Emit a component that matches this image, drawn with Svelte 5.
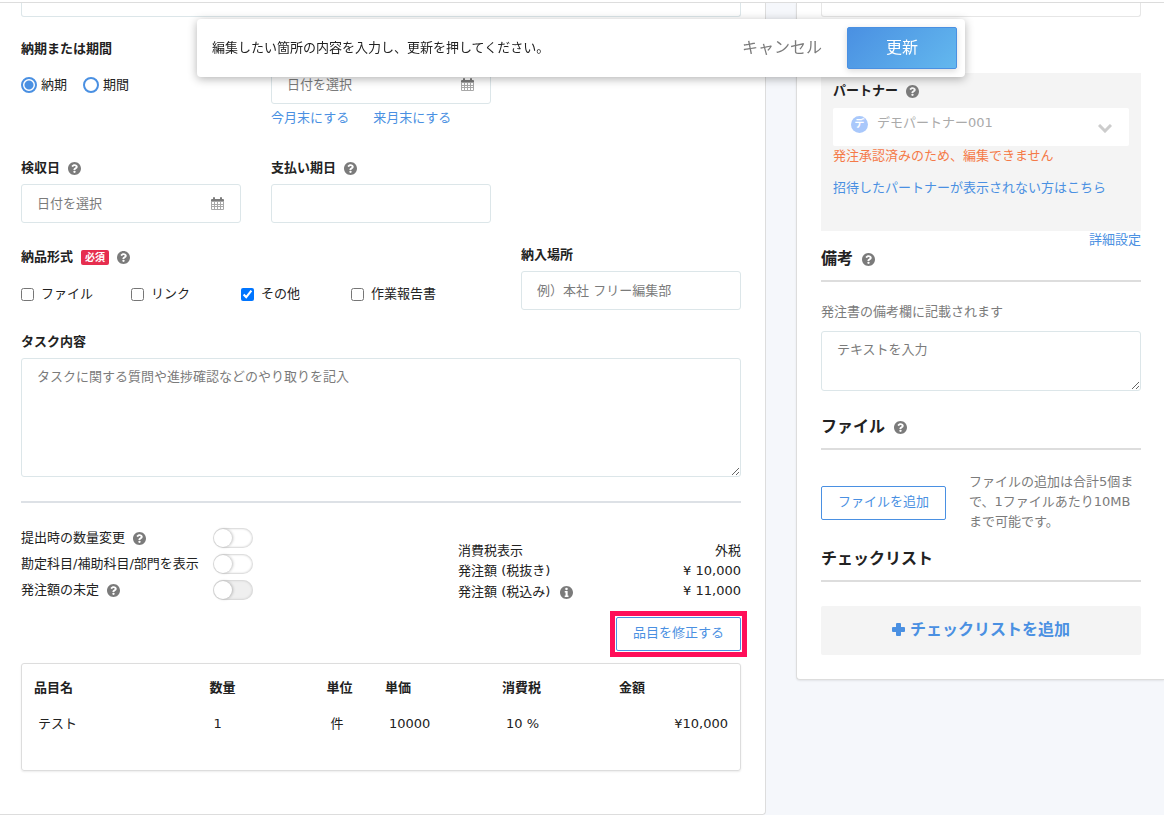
<script lang="ts">
	let dateType = $state('date');
	let formats = $state([
		{ name: 'ファイル', checked: false },
		{ name: 'リンク', checked: false },
		{ name: 'その他', checked: true },
		{ name: '作業報告書', checked: false }
	]);
	const switches = [
		{ id: 'quantity', name: '提出時の数量変更', help: true, disabled: false },
		{ id: 'account', name: '勘定科目/補助科目/部門を表示', help: false, disabled: false },
		{ id: 'undecided', name: '発注額の未定', help: true, disabled: true }
	];
	const items = [
		{ name: 'テスト', count: 1, unit: '件', price: '10000', tax: '10 %', total: '¥10,000' }
	];
</script>

{#snippet help()}
	<svg class="icon" viewBox="8 8 496 496" aria-hidden="true">
		<path
			d="M504 256c0 136.997-111.043 248-248 248S8 392.997 8 256C8 119.083 119.043 8 256 8s248 111.083 248 248zM262.655 90c-54.497 0-89.255 22.957-116.549 63.758-3.536 5.286-2.353 12.415 2.715 16.258l34.699 26.31c5.205 3.947 12.621 3.008 16.665-2.122 17.864-22.658 30.113-35.797 57.303-35.797 20.429 0 45.698 13.148 45.698 32.958 0 14.976-12.363 22.667-32.534 33.976C247.128 238.528 216 254.941 216 296v4c0 6.627 5.373 12 12 12h56c6.627 0 12-5.373 12-12v-1.333c0-28.462 83.186-29.647 83.186-106.667 0-58.002-60.165-102-116.531-102zM256 338c-25.365 0-46 20.635-46 46 0 25.364 20.635 46 46 46s46-20.636 46-46c0-25.365-20.635-46-46-46z"
		/>
	</svg>
{/snippet}

{#snippet info()}
	<svg class="icon" viewBox="8 8 496 496" aria-hidden="true">
		<path
			d="M256 8C119.043 8 8 119.083 8 256c0 136.997 111.043 248 248 248s248-111.003 248-248C504 119.083 392.957 8 256 8zm0 70c30 0 50 20 50 46s-20 46-50 46-50-20-50-46 20-46 50-46zm76 336c0 6.627-5.373 12-12 12H200c-6.627 0-12-5.373-12-12v-34c0-6.627 5.373-12 12-12h20V260h-20c-6.627 0-12-5.373-12-12v-34c0-6.627 5.373-12 12-12h88c6.627 0 12 5.373 12 12v154h20c6.627 0 12 5.373 12 12v34z"
		/>
	</svg>
{/snippet}

{#snippet calendar()}
	<svg class="icon" viewBox="0 0 13 13" aria-hidden="true">
		<path
			class="days"
			fill-rule="evenodd"
			d="M0 4h13v8q0 1-1 1H1q-1 0-1-1zM1 5v2h2V5zM4 5v2h2V5zM7 5v2h2V5zM10 5v2h2V5zM1 8v1h2V8zM4 8v1h2V8zM7 8v1h2V8zM10 8v1h2V8zM1 10v2h2v-2zM4 10v2h2v-2zM7 10v2h2v-2zM10 10v2h2v-2z"
		/>
		<path d="M1 2h1V1q0-1 1-1t1 1v1h5V1q0-1 1-1t1 1v1h1q1 0 1 1v1H0V3q0-1 1-1z" />
	</svg>
{/snippet}

<header class="topbar"></header>

<div class="notice">
	<p>編集したい箇所の内容を入力し、更新を押してください。</p>
	<button class="cancel" type="button">キャンセル</button>
	<button class="update" type="button">更新</button>
</div>

<main>
	<section class="card order">
		<input class="cut" type="text" aria-label="タスク名" />

		<div class="row first">
			<div class="field">
				<div class="label">納期または期間</div>
				<div class="radios">
					<label><input type="radio" value="date" bind:group={dateType} />納期</label>
					<label><input type="radio" value="period" bind:group={dateType} />期間</label>
				</div>
			</div>
			<div class="field">
				<div class="label"></div>
				<div class="date">
					<input type="text" placeholder="日付を選択" aria-label="納期" />
					{@render calendar()}
				</div>
				<div class="links">
					<a href="#this-month">今月末にする</a>
					<a href="#next-month">来月末にする</a>
				</div>
			</div>
		</div>

		<div class="row">
			<div class="field">
				<label class="label" for="check-date">検収日 {@render help()}</label>
				<div class="date">
					<input id="check-date" type="text" placeholder="日付を選択" />
					{@render calendar()}
				</div>
			</div>
			<div class="field">
				<label class="label" for="pay-date">支払い期日 {@render help()}</label>
				<input id="pay-date" class="text" type="text" />
			</div>
		</div>

		<div class="row">
			<div class="field wide">
				<div class="label tall">納品形式 <span class="badge">必須</span> {@render help()}</div>
				<div class="checks">
					{#each formats as format}
						<label><input type="checkbox" bind:checked={format.checked} />{format.name}</label>
					{/each}
				</div>
			</div>
			<div class="field">
				<label class="label" for="place">納入場所</label>
				<input id="place" class="text" type="text" placeholder="例）本社 フリー編集部" />
			</div>
		</div>

		<div class="task">
			<label class="label" for="task">タスク内容</label>
			<textarea id="task" placeholder="タスクに関する質問や進捗確認などのやり取りを記入"></textarea>
		</div>

		<div class="settings">
			<div class="switches">
				{#each switches as s}
					<label for={s.id}>{s.name} {#if s.help}{@render help()}{/if}</label>
					<input id={s.id} type="checkbox" role="switch" disabled={s.disabled} />
				{/each}
			</div>
			<dl>
				<dt>消費税表示</dt>
				<dd>外税</dd>
				<dt>発注額 (税抜き)</dt>
				<dd>¥ 10,000</dd>
				<dt>発注額 (税込み) {@render info()}</dt>
				<dd>¥ 11,000</dd>
			</dl>
		</div>

		<div class="actions">
			<div class="marked">
				<button class="outline" type="button">品目を修正する</button>
			</div>
		</div>

		<div class="items">
			<table>
				<thead>
					<tr>
						<th class="c3">品目名</th>
						<th class="c2">数量</th>
						<th class="c1">単位</th>
						<th class="c2">単価</th>
						<th class="c2">消費税</th>
						<th class="c2">金額</th>
					</tr>
				</thead>
				<tbody>
					{#each items as item}
						<tr>
							<td>{item.name}</td>
							<td>{item.count}</td>
							<td>{item.unit}</td>
							<td>{item.price}</td>
							<td>{item.tax}</td>
							<td class="total">{item.total}</td>
						</tr>
					{/each}
				</tbody>
			</table>
		</div>
	</section>

	<aside class="card side">
		<input class="cut" type="text" aria-label="管理番号" />

		<div class="partner">
			<label class="label" for="partner">パートナー {@render help()}</label>
			<div class="select">
				<span class="avatar">デ</span>
				<select id="partner" disabled>
					<option>デモパートナー001</option>
				</select>
				<svg class="chevron" viewBox="0 0 14 9" aria-hidden="true">
					<path d="M1 1l6 6 6-6" />
				</svg>
			</div>
			<p class="error">発注承認済みのため、編集できません</p>
			<a href="#invited">招待したパートナーが表示されない方はこちら</a>
		</div>
		<a class="detail" href="#detail">詳細設定</a>

		<h2>備考 {@render help()}</h2>
		<p class="hint">発注書の備考欄に記載されます</p>
		<textarea placeholder="テキストを入力" aria-label="備考"></textarea>

		<h2 class="files">ファイル {@render help()}</h2>
		<div class="upload">
			<button class="outline" type="button">ファイルを追加</button>
			<p>ファイルの追加は合計5個まで、1ファイルあたり10MBまで可能です。</p>
		</div>

		<h2 class="list">チェックリスト</h2>
		<button class="add" type="button">
			<svg viewBox="0 0 13 13" aria-hidden="true">
				<path d="M5 0h3q1 0 1 1v3h3q1 0 1 1v3q0 1-1 1H9v3q0 1-1 1H5q-1 0-1-1V9H1Q0 9 0 8V5q0-1 1-1h3V1q0-1 1-1z" />
			</svg>
			チェックリストを追加
		</button>
	</aside>
</main>

<style>
	:global(body) {
		background: #f5f7fb;
		color: #222;
		font-family: 'DejaVu Sans', 'Noto Sans CJK JP', sans-serif;
		font-size: 13px;
		line-height: 20px;
	}

	* {
		box-sizing: border-box;
	}

	p,
	h2,
	dl,
	dd {
		margin: 0;
	}

	input,
	textarea,
	select,
	button {
		margin: 0;
		font: inherit;
		color: inherit;
	}

	button {
		cursor: pointer;
	}

	a {
		color: #4a90e2;
		text-decoration: none;
	}

	.topbar {
		height: 3px;
		background: #fff;
		border-bottom: 1px solid #ddd;
	}

	.icon {
		flex: none;
		width: 13px;
		height: 13px;
		fill: #7b7b7b;
	}

	.days {
		fill: #a8a8a8;
	}

	/* floating bar */
	.notice {
		position: fixed;
		z-index: 1;
		top: 19px;
		left: 0;
		right: 2px;
		max-width: 768px;
		height: 58px;
		margin: 0 auto;
		padding: 0 8px 0 15px;
		display: flex;
		align-items: center;
		background: #fff;
		border-radius: 4px;
		box-shadow: 0 2px 10px rgba(0, 0, 0, 0.3);
	}

	.notice p {
		flex: 1;
	}

	.cancel {
		padding: 0 25px;
		border: 0;
		background: none;
		color: #7b7b7b;
		font-size: 16px;
	}

	.update {
		width: 110px;
		height: 42px;
		padding: 0;
		border: 1px solid #4a90e2;
		border-radius: 2px;
		background: linear-gradient(135deg, #4a90e2, #63b8ee);
		box-shadow: 0 2px 6px rgba(0, 0, 0, 0.15);
		color: #fff;
		font-size: 16px;
	}

	main {
		display: grid;
		grid-template-columns: minmax(0, 1fr) 368px;
		align-items: start;
		gap: 30px;
	}

	.card {
		background: #fff;
		border: 1px solid #ddd;
		border-top: 0;
	}

	.order {
		padding: 0 24px 43px 21px;
		border-left: 0;
		border-radius: 0 0 4px 0;
	}

	.side {
		padding: 0 23px 24px 24px;
		border-right: 0;
		border-radius: 0 0 0 4px;
		box-shadow: 0 1px 2px rgba(0, 0, 0, 0.08);
	}

	.cut {
		display: block;
		width: 100%;
		height: 14px;
		border: 1px solid #dce6e9;
		border-top: 0;
		border-radius: 0 0 3px 3px;
	}

	.side .cut {
		border-color: #e6e6e6;
	}

	/* form fields */
	.row {
		display: grid;
		grid-template-columns: repeat(3, minmax(0, 1fr));
		gap: 30px;
		margin-top: 22px;
	}

	.first {
		margin-bottom: 30px;
	}

	.wide {
		grid-column: span 2;
	}

	.label {
		display: flex;
		align-items: center;
		gap: 8px;
		height: 20px;
		margin-bottom: 6px;
		font-weight: bold;
	}

	.tall {
		height: 24px;
		margin-bottom: 15px;
	}

	.text,
	.date,
	textarea {
		display: block;
		width: 100%;
		background: #fff;
		border: 1px solid #dce6e9;
		border-radius: 3px;
	}

	.text {
		height: 39px;
		padding: 0 15px;
	}

	.date {
		display: flex;
		align-items: center;
		height: 39px;
		padding: 0 16px 0 15px;
	}

	.date input {
		flex: 1;
		min-width: 0;
		padding: 0;
		border: 0;
	}

	textarea {
		height: 60px;
		padding: 8px 15px;
	}

	::placeholder {
		color: #7b7b7b;
	}

	.radios {
		display: flex;
		gap: 16px;
		padding-top: 10px;
	}

	.radios label {
		display: flex;
		align-items: center;
		gap: 4px;
	}

	.radios input {
		appearance: none;
		width: 16px;
		height: 16px;
		border: 2px solid #4a90e2;
		border-radius: 50%;
	}

	.radios input:checked {
		background: radial-gradient(#4a90e2 4px, transparent 5px);
	}

	.links {
		display: flex;
		gap: 24px;
		margin-top: 4px;
	}

	.badge {
		padding: 0 4px;
		border-radius: 2px;
		background: #e62e4f;
		color: #fff;
		font-size: 10px;
		line-height: 15px;
	}

	.checks {
		display: grid;
		grid-template-columns: repeat(4, 110px);
	}

	.checks label {
		display: flex;
		align-items: center;
		gap: 7px;
	}

	.checks input {
		width: 13px;
		height: 13px;
	}

	.task {
		margin-top: 22px;
	}

	.task textarea {
		height: 119px;
	}

	/* switches and sums */
	.settings {
		display: flex;
		justify-content: space-between;
		margin-top: 24px;
		padding-top: 22px;
		border-top: 2px solid #dde1e6;
	}

	.switches {
		display: grid;
		grid-template-columns: 180px 40px;
		grid-auto-rows: 26px;
		align-items: center;
		align-content: start;
		column-gap: 12px;
	}

	.switches label {
		display: flex;
		align-items: center;
		gap: 8px;
	}

	.switches input {
		appearance: none;
		display: flex;
		align-items: center;
		width: 40px;
		height: 20px;
		padding: 0 1px;
		border-radius: 10px;
		background: #fff;
		box-shadow: inset 0 0 2px 1px #d4d4d4;
	}

	.switches input::before {
		content: '';
		width: 18px;
		height: 18px;
		border-radius: 50%;
		background: #fff;
		box-shadow: 1px 0 3px rgba(0, 0, 0, 0.25);
	}

	.switches input:checked {
		justify-content: flex-end;
		background: #4a90e2;
	}

	.switches input:disabled {
		background: #efefef;
	}

	dl {
		display: grid;
		grid-template-columns: 1fr auto;
		grid-template-rows: 20px 20px 22px;
		width: 283px;
		margin-top: 16px;
	}

	dt {
		display: flex;
		align-items: center;
		gap: 10px;
	}

	dd {
		text-align: right;
	}

	.actions {
		display: flex;
		justify-content: flex-end;
		margin: 14px 0 12px;
	}

	.outline {
		display: block;
		flex: none;
		width: 125px;
		height: 34px;
		padding: 0 0 2px;
		border: 1px solid #4a90e2;
		border-radius: 2px;
		background: #fff;
		color: #4a90e2;
	}

	.marked {
		outline: 5px solid #ff0f5a;
		outline-offset: 1px;
	}

	.items {
		padding: 6px 8px 28px;
		border: 1px solid #ddd;
		border-radius: 3px;
		box-shadow: 0 1px 2px rgba(0, 0, 0, 0.08);
	}

	table {
		width: 100%;
		table-layout: fixed;
		border-collapse: collapse;
	}

	th,
	td {
		height: 36px;
		padding: 0 4px;
		text-align: left;
	}

	td {
		padding-left: 8px;
	}

	.c1 {
		width: 8.333%;
	}

	.c2 {
		width: 16.667%;
	}

	.c3 {
		width: 25%;
	}

	.total {
		text-align: right;
	}

	/* right column */
	.partner {
		margin-top: 56px;
		padding: 8px 12px 33px;
		background: #f4f4f4;
	}

	.partner .label {
		margin-bottom: 7px;
	}

	.select {
		position: relative;
	}

	.select select {
		appearance: none;
		display: block;
		width: 100%;
		height: 38px;
		padding: 0 40px 8px 44px;
		border: 0;
		border-radius: 2px;
		background: #fff;
		color: #aaa;
		opacity: 1;
	}

	.avatar {
		position: absolute;
		top: 8px;
		left: 18px;
		width: 17px;
		height: 17px;
		border-radius: 50%;
		background: #a9c8fb;
		color: #fff;
		font-size: 10px;
		font-weight: bold;
		line-height: 16px;
		text-align: center;
	}

	.chevron {
		position: absolute;
		top: 16px;
		right: 17px;
		width: 14px;
		height: 9px;
		fill: none;
		stroke: #ccc;
		stroke-width: 3;
	}

	.error {
		margin-bottom: 12px;
		color: #f47a48;
	}

	.partner a {
		display: block;
	}

	.detail {
		display: block;
		line-height: 17px;
		text-align: right;
	}

	h2 {
		display: flex;
		align-items: center;
		gap: 9px;
		padding-bottom: 10px;
		border-bottom: 2px solid #ddd;
		font-size: 16px;
		line-height: 22px;
	}

	.files {
		margin-top: 25px;
	}

	.list {
		margin-top: 16px;
	}

	.hint {
		margin: 20px 0 9px;
		color: #7b7b7b;
	}

	.upload {
		display: flex;
		align-items: flex-start;
		gap: 23px;
		margin-top: 22px;
		color: #7b7b7b;
	}

	.upload .outline {
		margin-top: 14px;
	}

	.add {
		display: flex;
		align-items: center;
		justify-content: center;
		gap: 5px;
		width: 100%;
		height: 49px;
		margin-top: 24px;
		padding: 0 0 2px;
		border: 0;
		border-radius: 2px;
		background: #f4f4f4;
		color: #4a90e2;
		font-size: 16px;
		font-weight: bold;
	}

	.add svg {
		width: 13px;
		height: 13px;
		fill: #4a90e2;
	}
</style>
